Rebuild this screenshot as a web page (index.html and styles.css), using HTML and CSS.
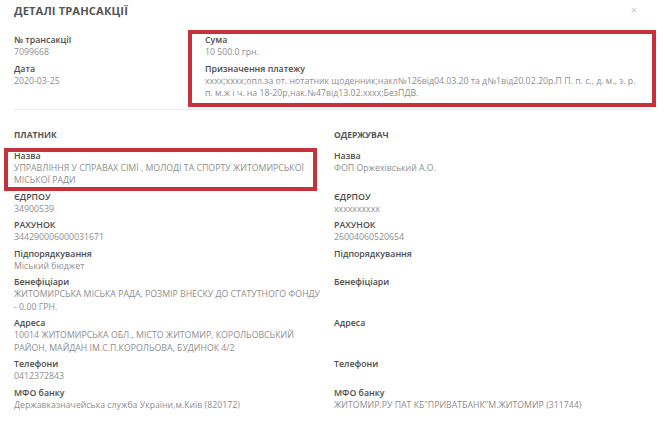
FILE: index.html
```html
<!DOCTYPE html>
<html lang="uk">
<head>
<meta charset="utf-8">
<title>Деталі трансакції</title>
<link rel="stylesheet" href="styles.css">
</head>
<body>
<div class="modal">
  <header class="head">
    <h1 class="title">ДЕТАЛІ ТРАНСАКЦІЇ</h1>
    <span class="close">×</span>
  </header>

  <section class="top">
    <div class="top-left">
      <div class="field">
        <div class="label">№ трансакції</div>
        <div class="value">7099668</div>
      </div>
      <div class="field">
        <div class="label">Дата</div>
        <div class="value">2020-03-25</div>
      </div>
    </div>
    <div class="top-right">
      <div class="field">
        <div class="label">Сума</div>
        <div class="value">10 500.0 грн.</div>
      </div>
      <div class="field">
        <div class="label">Призначення платежу</div>
        <div class="value">xxxx;xxxx;опл.за от. нотатник щоденник;накл№126від04.03.20 та д№1від20.02.20р.П П. п. с., д. м., з. р. п. м.ж і ч. на 18-20р,нак.№47від13.02.xxxx;БезПДВ.</div>
      </div>
    </div>
  </section>

  <hr class="sep">

  <section class="parties">
    <div class="heading">ПЛАТНИК</div>
    <div class="heading">ОДЕРЖУВАЧ</div>

    <div class="field hl">
      <div class="label">Назва</div>
      <div class="value">УПРАВЛІННЯ У СПРАВАХ СІМЇ , МОЛОДІ ТА СПОРТУ ЖИТОМИРСЬКОЇ МІСЬКОЇ РАДИ</div>
    </div>
    <div class="field">
      <div class="label">Назва</div>
      <div class="value">ФОП Оржехівський А.О.</div>
    </div>

    <div class="field">
      <div class="label">ЄДРПОУ</div>
      <div class="value">34900539</div>
    </div>
    <div class="field">
      <div class="label">ЄДРПОУ</div>
      <div class="value">xxxxxxxxxx</div>
    </div>

    <div class="field">
      <div class="label">РАХУНОК</div>
      <div class="value">344290006000031671</div>
    </div>
    <div class="field">
      <div class="label">РАХУНОК</div>
      <div class="value">26004060520654</div>
    </div>

    <div class="field">
      <div class="label">Підпорядкування</div>
      <div class="value">Міський бюджет</div>
    </div>
    <div class="field">
      <div class="label">Підпорядкування</div>
      <div class="value"></div>
    </div>

    <div class="field">
      <div class="label">Бенефіціари</div>
      <div class="value">ЖИТОМИРСЬКА МІСЬКА РАДА, РОЗМІР ВНЕСКУ ДО СТАТУТНОГО ФОНДУ - 0.00 ГРН.</div>
    </div>
    <div class="field">
      <div class="label">Бенефіціари</div>
      <div class="value"></div>
    </div>

    <div class="field">
      <div class="label">Адреса</div>
      <div class="value">10014 ЖИТОМИРСЬКА ОБЛ., МІСТО ЖИТОМИР, КОРОЛЬОВСЬКИЙ РАЙОН, МАЙДАН ІМ.С.П.КОРОЛЬОВА, БУДИНОК 4/2</div>
    </div>
    <div class="field">
      <div class="label">Адреса</div>
      <div class="value"></div>
    </div>

    <div class="field">
      <div class="label">Телефони</div>
      <div class="value">0412372843</div>
    </div>
    <div class="field">
      <div class="label">Телефони</div>
      <div class="value"></div>
    </div>

    <div class="field">
      <div class="label">МФО банку</div>
      <div class="value">Державказначейська служба України,м.Київ (820172)</div>
    </div>
    <div class="field">
      <div class="label">МФО банку</div>
      <div class="value">ЖИТОМИР.РУ ПАТ КБ"ПРИВАТБАНК"М.ЖИТОМИР (311744)</div>
    </div>
  </section>
</div>
</body>
</html>
```

FILE: styles.css
```css
html, body {
  margin: 0;
  padding: 0;
  background: #ffffff;
}

body {
  font-family: "Open Sans", "Noto Sans", sans-serif;
  color: #555555;
}

.modal {
  width: 665px;
  padding: 4px 14px 0 14px;
  box-sizing: border-box;
}

.head {
  display: flex;
  justify-content: space-between;
  align-items: flex-start;
  height: 26px;
}

.title {
  margin: 0;
  font-size: 11.2px;
  line-height: 14px;
  font-weight: 700;
  color: #555555;
  letter-spacing: 0.1px;
}

.close {
  font-size: 11px;
  line-height: 10px;
  color: #c4c4c4;
  margin-right: 14px;
  margin-top: 1px;
}

.top {
  display: grid;
  grid-template-columns: 174px 468px;
}

.top-left {
  padding-top: 4px;
}

.top-right {
  border: 4px solid #c8303a;
  padding: 0 0 3px 13px;
}

.field {
  padding-bottom: 4px;
}

.top-right .field:last-child {
  padding-bottom: 0;
}

.label {
  font-size: 8.8px;
  line-height: 12px;
  font-weight: 600;
  color: #4d4d4d;
}

.value {
  font-size: 8.75px;
  line-height: 12.5px;
  color: #8e8e8e;
  min-height: 12.5px;
}

.top-right .value {
  padding-right: 8px;
}

.sep {
  margin: 2px 0 0 0;
  border: 0;
  height: 1px;
  background: #e9e9e9;
}

.parties {
  display: grid;
  grid-template-columns: 320px 1fr;
  padding-top: 19px;
}

.parties .field {
  padding-right: 10px;
}

.heading {
  font-size: 8.5px;
  line-height: 12px;
  font-weight: 700;
  color: #555555;
  margin-bottom: 9px;
}

.hl {
  position: relative;
}

.hl::after {
  content: "";
  position: absolute;
  left: -10px;
  top: -2px;
  right: 17px;
  bottom: 0;
  border: 4px solid #c8303a;
}
```
